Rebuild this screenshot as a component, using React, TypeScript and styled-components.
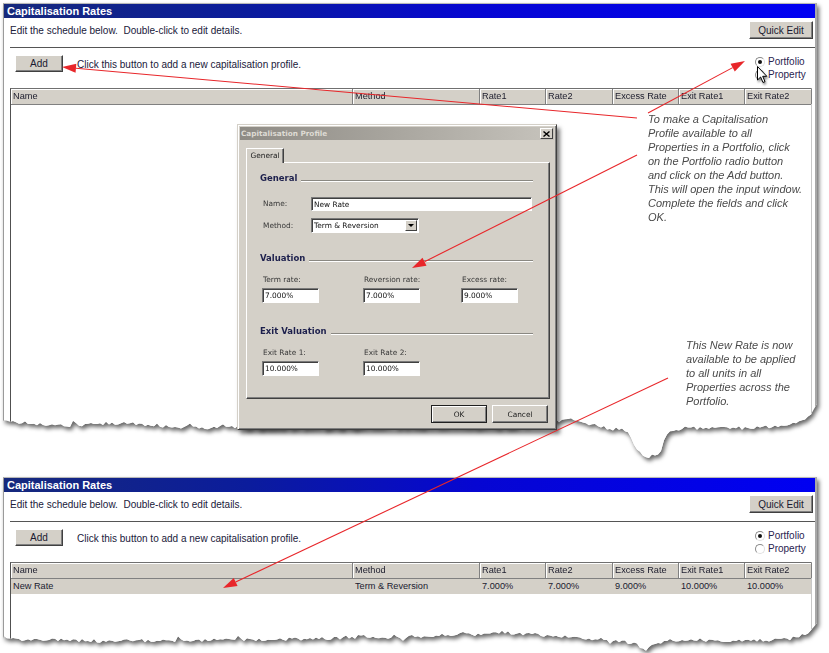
import React from "react";
import styled, { createGlobalStyle } from "styled-components";

const SANS = `"Liberation Sans", Arial, sans-serif`;
const UI = `"DejaVu Sans", Verdana, sans-serif`;

const GlobalStyle = createGlobalStyle`
  html, body { margin: 0; padding: 0; background: #fff; }
  body { width: 829px; height: 653px; overflow: hidden; font-family: ${SANS}; }
  * { box-sizing: border-box; }
`;

/* ---------- torn edge generator ---------- */
function mulberry32(a: number) {
  return function () {
    a |= 0;
    a = (a + 0x6d2b79f5) | 0;
    let t = Math.imul(a ^ (a >>> 15), 1 | a);
    t = (t + Math.imul(t ^ (t >>> 7), 61 | t)) ^ t;
    return ((t ^ (t >>> 14)) >>> 0) / 4294967296;
  };
}

function tornClip(w: number, pts: [number, number][], seed: number): string {
  const rnd = mulberry32(seed);
  const s = [...pts].sort((a, b) => a[0] - b[0]);
  const base = (x: number) => {
    if (x <= s[0][0]) return s[0][1];
    for (let i = 0; i < s.length - 1; i++) {
      const [x1, y1] = s[i];
      const [x2, y2] = s[i + 1];
      if (x >= x1 && x <= x2) return y1 + ((y2 - y1) * (x - x1)) / (x2 - x1 || 1);
    }
    return s[s.length - 1][1];
  };
  const out: string[] = ["0px 0px", `${w}px 0px`];
  for (let x = w; x >= 0; x -= 3) {
    let y = base(x) + (rnd() - 0.5) * 3.5;
    if (rnd() < 0.12) y += (rnd() - 0.5) * 7;
    out.push(`${x}px ${y.toFixed(1)}px`);
  }
  out.push(`0px ${base(0).toFixed(1)}px`);
  return `polygon(${out.join(",")})`;
}

const abs = (pts: [number, number][], dx: number, dy: number): [number, number][] =>
  pts.map(([x, y]) => [x - dx, y - dy]);

const TOP_CLIP = tornClip(
  814,
  abs(
    [
      [0, 421], [30, 424], [60, 426], [120, 423], [200, 428], [235, 427], [300, 428],
      [400, 426], [500, 427], [570, 420], [600, 427], [628, 431], [638, 452], [648, 458],
      [660, 452], [668, 431], [690, 427], [750, 428], [790, 425], [808, 418], [817, 404],
    ],
    3,
    3
  ),
  11
);

const BOTTOM_CLIP = tornClip(
  814,
  abs(
    [
      [0, 639], [100, 641], [200, 640], [300, 639], [400, 637], [480, 634], [500, 632],
      [560, 636], [620, 641], [638, 645], [646, 650], [655, 644], [670, 640], [750, 641],
      [790, 639], [808, 634], [817, 624],
    ],
    3,
    477
  ),
  29
);

/* ---------- page layout ---------- */
const Page = styled.div`
  position: relative;
  width: 829px;
  height: 653px;
  overflow: hidden;
  background: #fff;
  display: flex;
  flex-direction: column;
  padding: 3px 0 0 3px;
`;

const Shot = styled.div<{ $h: number; $mt?: number }>`
  flex-shrink: 0;
  width: 814px;
  height: ${(p) => p.$h}px;
  margin-top: ${(p) => p.$mt ?? 0}px;
  filter: drop-shadow(2px 3px 2px rgba(0, 0, 0, 0.6));
`;

const Panel = styled.div<{ $clip: string }>`
  height: 100%;
  background: #fff;
  border-top: 1px solid #b8b8b8;
  border-left: 1px solid #9a9a9a;
  border-right: 2px solid #a8a8a8;
  display: flex;
  flex-direction: column;
  clip-path: ${(p) => p.$clip};
  color: #20203a;
`;

const TitleBar = styled.div`
  flex-shrink: 0;
  height: 14px;
  padding-left: 3px;
  background: linear-gradient(90deg, #16297c 0%, #0b1c9c 30%, #0606d2 58%, #0000f2 100%);
  color: #fff;
  font: bold 11px ${SANS};
  line-height: 14px;
`;

const HeadRow = styled.div`
  flex-shrink: 0;
  height: 24px;
  display: flex;
  align-items: center;
  justify-content: space-between;
  padding: 0 2px 0 6px;
`;

const Text = styled.span`
  font: 10px ${SANS};
  white-space: pre;
  color: #20203a;
`;

const Button = styled.button<{ $w: number; $h?: number }>`
  width: ${(p) => p.$w}px;
  height: ${(p) => p.$h ?? 18}px;
  padding: 0;
  background: #d4d0c8;
  font: 10px ${SANS};
  color: #1a1a30;
  border: 1px solid;
  border-color: #ffffff #404040 #404040 #ffffff;
  box-shadow: inset -1px -1px #808080;
`;

const Divider = styled.div`
  flex-shrink: 0;
  height: 1px;
  margin: 5px 0 0 6px;
  background: #555;
`;

const ControlsRow = styled.div`
  flex-shrink: 0;
  height: 40px;
  display: flex;
  align-items: flex-start;
  padding: 7px 0 0 11px;
`;

const Hint = styled(Text)`
  margin-left: 14px;
  line-height: 19px;
`;

const RadioGroup = styled.div`
  margin-left: auto;
  width: 60px;
  display: flex;
  flex-direction: column;
`;

const RadioRow = styled.label`
  display: flex;
  align-items: center;
  gap: 3px;
  height: 13px;
  font: 10px ${SANS};
  color: #2a2450;
`;

const RadioDot = styled.span<{ $on?: boolean }>`
  position: relative;
  width: 10px;
  height: 10px;
  border-radius: 50%;
  border: 1px solid #8a8a8a;
  border-bottom-color: #e0e0e0;
  border-right-color: #e0e0e0;
  background: #fff;
  &::after {
    content: "";
    display: ${(p) => (p.$on ? "block" : "none")};
    position: absolute;
    left: 2px;
    top: 2px;
    width: 4px;
    height: 4px;
    border-radius: 50%;
    background: #111;
  }
`;

const COLS = "342px 127px 66px 67px 66px 66px 67px";

const Table = styled.div`
  flex: 1;
  margin: 0 3px 0 6px;
  border-top: 1px solid #707070;
  border-left: 1px solid #505050;
  border-right: 1px solid #c8c8c8;
  display: flex;
  flex-direction: column;
  background: #fff;
`;

const HeaderRow = styled.div`
  display: grid;
  grid-template-columns: ${COLS};
  height: 16px;
  background: #d4d0c8;
  border-bottom: 1px solid #808080;
`;

const HeadCell = styled.div`
  padding-left: 2px;
  font: 9.2px ${SANS};
  line-height: 15px;
  color: #202030;
  border-right: 1px solid #808080;
  box-shadow: inset 1px 1px #fff;
  white-space: nowrap;
  overflow: hidden;
`;

const DataRow = styled.div`
  display: grid;
  grid-template-columns: ${COLS};
  height: 15px;
  background: #d4d0c8;
`;

const DataCell = styled.div`
  padding-left: 2px;
  font: 9.2px ${SANS};
  line-height: 15px;
  color: #202030;
  white-space: nowrap;
`;

const HEADERS = ["Name", "Method", "Rate1", "Rate2", "Excess Rate", "Exit Rate1", "Exit Rate2"];

function CapRates({ rows }: { rows: string[][] }) {
  return (
    <>
      <TitleBar>Capitalisation Rates</TitleBar>
      <HeadRow>
        <Text>{"Edit the schedule below.  Double-click to edit details."}</Text>
        <Button $w={64}>Quick Edit</Button>
      </HeadRow>
      <Divider />
      <ControlsRow>
        <Button $w={48} $h={17}>Add</Button>
        <Hint>Click this button to add a new capitalisation profile.</Hint>
        <RadioGroup>
          <RadioRow>
            <RadioDot $on />
            Portfolio
          </RadioRow>
          <RadioRow>
            <RadioDot />
            Property
          </RadioRow>
        </RadioGroup>
      </ControlsRow>
      <Table>
        <HeaderRow>
          {HEADERS.map((h) => (
            <HeadCell key={h}>{h}</HeadCell>
          ))}
        </HeaderRow>
        {rows.map((r, i) => (
          <DataRow key={i}>
            {r.map((c, j) => (
              <DataCell key={j}>{c}</DataCell>
            ))}
          </DataRow>
        ))}
      </Table>
    </>
  );
}

/* ---------- dialog ---------- */
const Dialog = styled.div`
  position: absolute;
  left: 237px;
  top: 124px;
  width: 320px;
  height: 306px;
  background: #d4d0c8;
  border: 1px solid;
  border-color: #d4d0c8 #404040 #404040 #d4d0c8;
  box-shadow: inset 1px 1px #fff, inset -1px -1px #808080, 3px 4px 4px rgba(0, 0, 0, 0.5);
  padding: 2px;
  display: flex;
  flex-direction: column;
  z-index: 2;
`;

const DlgTitle = styled.div`
  height: 13px;
  display: flex;
  align-items: center;
  justify-content: space-between;
  padding: 0 1px 0 1px;
  background: linear-gradient(90deg, #8e8b85 0%, #a9a69f 50%, #c6c3bc 100%);
  color: #dedbd4;
  font: bold 7.3px ${UI};
`;

const CloseBtn = styled.span`
  width: 13px;
  height: 11px;
  display: flex;
  align-items: center;
  justify-content: center;
  background: #d4d0c8;
  border: 1px solid;
  border-color: #fff #404040 #404040 #fff;
`;

const DlgBody = styled.div`
  flex: 1;
  display: flex;
  flex-direction: column;
  padding: 8px 4px 0 6px;
`;

const TabStrip = styled.div`
  display: flex;
  height: 15px;
  position: relative;
  z-index: 1;
`;

const Tab = styled.div`
  width: 38px;
  height: 15px;
  background: #d4d0c8;
  border: 1px solid;
  border-color: #fff #404040 transparent #fff;
  border-bottom: none;
  box-shadow: inset -1px 0 #808080;
  font: 7.4px ${UI};
  color: #202020;
  line-height: 13px;
  text-align: center;
`;

const TabPanel = styled.div`
  margin-top: -1px;
  width: 304px;
  height: 237px;
  border: 1px solid;
  border-color: #fff #404040 #404040 #fff;
  box-shadow: inset -1px -1px #808080;
  padding: 9px 16px 0 13px;
  display: flex;
  flex-direction: column;
`;

const Heading = styled.div<{ $mt: number }>`
  display: flex;
  align-items: center;
  height: 12px;
  margin-top: ${(p) => p.$mt}px;
  font: bold 8.5px ${UI};
  color: #1c1f4c;
  white-space: nowrap;
  &::after {
    content: "";
    flex: 1;
    margin-left: 4px;
    margin-top: 5px;
    border-top: 1px solid #8a8882;
    border-bottom: 1px solid #fff;
  }
`;

const FieldRow = styled.div<{ $mt: number }>`
  display: flex;
  align-items: center;
  margin-top: ${(p) => p.$mt}px;
  padding-left: 3px;
`;

const Label = styled.span<{ $w?: number }>`
  display: block;
  width: ${(p) => (p.$w ? `${p.$w}px` : "auto")};
  font: 7.4px ${UI};
  line-height: 10px;
  color: #383838;
  white-space: nowrap;
`;

const Input = styled.div<{ $w: number; $h?: number }>`
  width: ${(p) => p.$w}px;
  height: ${(p) => p.$h ?? 15}px;
  background: #fff;
  border: 1px solid;
  border-color: #7a7a7a #fff #fff #7a7a7a;
  box-shadow: inset 1px 1px #404040;
  padding: 0 0 0 2px;
  font: 7.4px ${UI};
  line-height: 13px;
  color: #111;
  display: flex;
  align-items: center;
  justify-content: space-between;
`;

const DropBtn = styled.span`
  width: 12px;
  height: 11px;
  margin-right: 1px;
  background: #d4d0c8;
  border: 1px solid;
  border-color: #fff #404040 #404040 #fff;
  display: flex;
  align-items: center;
  justify-content: center;
  &::after {
    content: "";
    border-left: 3px solid transparent;
    border-right: 3px solid transparent;
    border-top: 3px solid #000;
  }
`;

const RateGrid = styled.div<{ $mt: number }>`
  display: grid;
  grid-template-columns: 101px 98px 1fr;
  margin-top: ${(p) => p.$mt}px;
  padding-left: 2px;
`;

const RateCell = styled.div`
  display: flex;
  flex-direction: column;
  gap: 3px;
  & > span {
    padding-left: 1px;
  }
`;

const DlgButtons = styled.div`
  display: flex;
  justify-content: flex-end;
  gap: 5px;
  margin: 6px 2px 0 0;
`;

const DlgButton = styled.button<{ $def?: boolean }>`
  width: 56px;
  height: 18px;
  padding: 0;
  background: #d4d0c8;
  font: 7.4px ${UI};
  color: #202020;
  border: 1px solid;
  border-color: ${(p) => (p.$def ? "#202020" : "#fff #404040 #404040 #fff")};
  box-shadow: ${(p) => (p.$def ? "inset 1px 1px #fff, inset -1px -1px #808080" : "inset -1px -1px #808080")};
`;

function RateField({ label, value }: { label: string; value: string }) {
  return (
    <RateCell>
      <Label as="span">{label}</Label>
      <Input $w={57}>{value}</Input>
    </RateCell>
  );
}

function ProfileDialog() {
  return (
    <Dialog>
      <DlgTitle>
        <span>Capitalisation Profile</span>
        <CloseBtn>
          <svg width="7" height="6" viewBox="0 0 7 6">
            <path d="M0.5 0.5 L6.5 5.5 M6.5 0.5 L0.5 5.5" stroke="#000" strokeWidth="1.4" />
          </svg>
        </CloseBtn>
      </DlgTitle>
      <DlgBody>
        <TabStrip>
          <Tab>General</Tab>
        </TabStrip>
        <TabPanel>
          <Heading $mt={0}>General</Heading>
          <FieldRow $mt={13}>
            <Label $w={48}>Name:</Label>
            <Input $w={221} $h={14}>New Rate</Input>
          </FieldRow>
          <FieldRow $mt={7}>
            <Label $w={48}>Method:</Label>
            <Input $w={108}>
              Term &amp; Reversion
              <DropBtn />
            </Input>
          </FieldRow>
          <Heading $mt={19}>Valuation</Heading>
          <RateGrid $mt={11}>
            <RateField label="Term rate:" value="7.000%" />
            <RateField label="Reversion rate:" value="7.000%" />
            <RateField label="Excess rate:" value="9.000%" />
          </RateGrid>
          <Heading $mt={22}>Exit Valuation</Heading>
          <RateGrid $mt={11}>
            <RateField label="Exit Rate 1:" value="10.000%" />
            <RateField label="Exit Rate 2:" value="10.000%" />
          </RateGrid>
        </TabPanel>
        <DlgButtons>
          <DlgButton $def>OK</DlgButton>
          <DlgButton>Cancel</DlgButton>
        </DlgButtons>
      </DlgBody>
    </Dialog>
  );
}

/* ---------- annotations ---------- */
const Note = styled.div<{ $x: number; $y: number }>`
  position: absolute;
  left: ${(p) => p.$x}px;
  top: ${(p) => p.$y}px;
  font: italic 11px ${SANS};
  line-height: 14px;
  color: #4a4a4a;
  white-space: nowrap;
  z-index: 3;
  & > span {
    display: block;
  }
`;

const Overlay = styled.svg`
  position: absolute;
  left: 0;
  top: 0;
  z-index: 4;
  pointer-events: none;
`;

const Cursor = styled.svg`
  position: absolute;
  left: 757px;
  top: 66px;
  z-index: 5;
  filter: drop-shadow(1px 2px 1px rgba(0, 0, 0, 0.45));
`;

type Arrow = { from: [number, number]; to: [number, number] };
const ARROWS: Arrow[] = [
  { from: [637, 118], to: [62, 67] },
  { from: [648, 113], to: [745, 61] },
  { from: [637, 155], to: [412, 268] },
  { from: [668, 378], to: [223, 588] },
];

function ArrowShape({ from, to }: Arrow) {
  const [x1, y1] = from;
  const [x2, y2] = to;
  const len = Math.hypot(x2 - x1, y2 - y1);
  const dx = (x2 - x1) / len;
  const dy = (y2 - y1) / len;
  const L = 14;
  const W = 9;
  const bx = x2 - dx * L;
  const by = y2 - dy * L;
  const nx = -dy * (W / 2);
  const ny = dx * (W / 2);
  return (
    <g>
      <line x1={x1} y1={y1} x2={bx} y2={by} stroke="#e8262a" strokeWidth="1.1" />
      <polygon
        points={`${x2},${y2} ${bx + nx},${by + ny} ${bx - nx},${by - ny}`}
        fill="#e8262a"
      />
    </g>
  );
}

export default function App() {
  return (
    <>
      <GlobalStyle />
      <Page>
        <Shot $h={457}>
          <Panel $clip={TOP_CLIP}>
            <CapRates rows={[]} />
          </Panel>
        </Shot>
        <Shot $h={176} $mt={17}>
          <Panel $clip={BOTTOM_CLIP}>
            <CapRates
              rows={[["New Rate", "Term & Reversion", "7.000%", "7.000%", "9.000%", "10.000%", "10.000%"]]}
            />
          </Panel>
        </Shot>

        <ProfileDialog />

        <Note $x={648} $y={112}>
          <span>To make a Capitalisation</span>
          <span>Profile available to all</span>
          <span>Properties in a Portfolio, click</span>
          <span>on the Portfolio radio button</span>
          <span>and click on the Add button.</span>
          <span>This will open the input window.</span>
          <span>Complete the fields and click</span>
          <span>OK.</span>
        </Note>
        <Note $x={686} $y={338}>
          <span>This New Rate is now</span>
          <span>available to be applied</span>
          <span>to all units in all</span>
          <span>Properties across the</span>
          <span>Portfolio.</span>
        </Note>

        <Overlay width="829" height="653" viewBox="0 0 829 653">
          {ARROWS.map((a, i) => (
            <ArrowShape key={i} {...a} />
          ))}
        </Overlay>

        <Cursor width="12" height="18" viewBox="0 0 12 18">
          <path
            d="M0.5 0.5 L0.5 14 L3.6 11 L6 16.5 L8 15.6 L5.7 10.3 L9.8 10.3 Z"
            fill="#fff"
            stroke="#000"
            strokeWidth="1"
            strokeLinejoin="round"
          />
        </Cursor>
      </Page>
    </>
  );
}
